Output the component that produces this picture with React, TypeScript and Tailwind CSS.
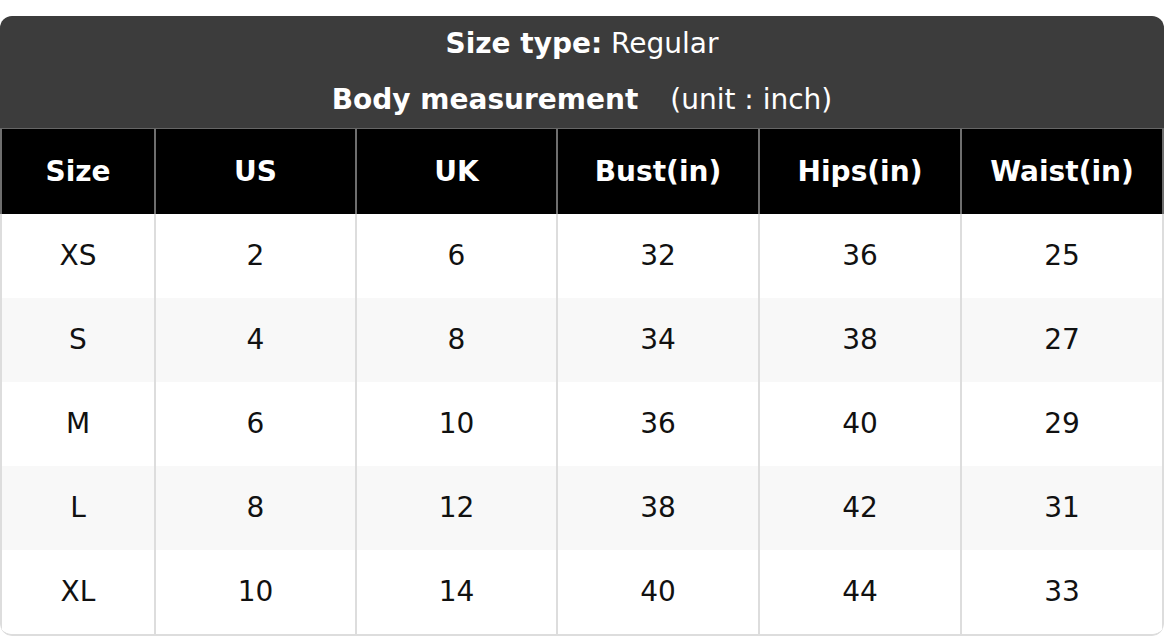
import React from 'react';

const headers = ['Size', 'US', 'UK', 'Bust(in)', 'Hips(in)', 'Waist(in)'];

const rows = [
  ['XS', '2', '6', '32', '36', '25'],
  ['S', '4', '8', '34', '38', '27'],
  ['M', '6', '10', '36', '40', '29'],
  ['L', '8', '12', '38', '42', '31'],
  ['XL', '10', '14', '40', '44', '33'],
];

const cols = 'grid grid-cols-[154px_201px_201px_202px_202px_1fr]';

const App = () => {
  return (
    <div className="bg-white pt-[16px] font-['DejaVu_Sans',sans-serif]">
      <div className="rounded-[12px] overflow-hidden">
        <div className="bg-[#3c3c3c] text-white text-[28px] border-b border-[#666]">
          <div className="h-[55px] flex items-center justify-center">
            <span className="font-bold">Size type:</span>
            <span>&nbsp;Regular</span>
          </div>
          <div className="h-[57px] flex items-center justify-center">
            <span className="font-bold">Body measurement</span>
            <span className="ml-[32px]">(unit : inch)</span>
          </div>
        </div>
        <div className={`${cols} bg-black text-white font-bold text-[28px]`}>
          {headers.map((h, i) => (
            <div
              key={h}
              className={`h-[85px] flex items-center justify-center border-l-2 border-[#6e6e6e] ${i === headers.length - 1 ? 'border-r-2' : ''}`}
            >
              {h}
            </div>
          ))}
        </div>
        <div className="border-b-2 border-[#ddd] rounded-b-[12px] overflow-hidden">
          {rows.map((r, ri) => (
            <div key={r[0]} className={`${cols} text-[28px] text-[#111] ${ri % 2 === 1 ? 'bg-[#f8f8f8]' : 'bg-white'}`}>
              {r.map((c, i) => (
                <div
                  key={i}
                  className={`h-[84px] flex items-center justify-center border-l-2 border-[#ddd] ${i === r.length - 1 ? 'border-r-2' : ''}`}
                >
                  {c}
                </div>
              ))}
            </div>
          ))}
        </div>
      </div>
    </div>
  );
};

export default App;
